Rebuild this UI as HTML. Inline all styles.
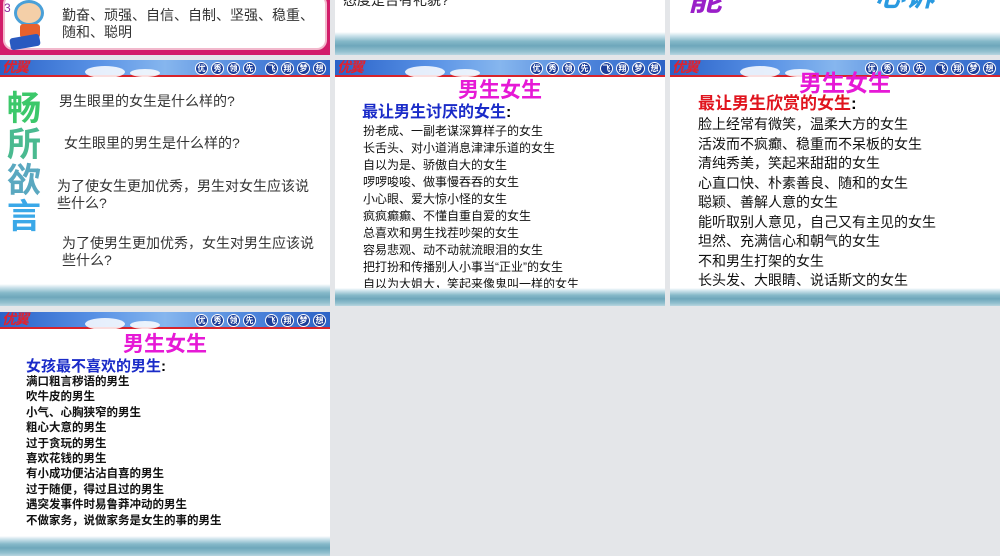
<!DOCTYPE html><html><head><meta charset="utf-8"><style>
*{margin:0;padding:0;box-sizing:border-box}
body{width:1000px;height:556px;background:#e4e6e9;position:relative;overflow:hidden;font-family:"Liberation Sans","Noto Sans CJK SC",sans-serif}
.s{position:absolute;background:#fff;overflow:hidden}
.hd{position:absolute;left:0;top:0;width:100%;height:17px;background:linear-gradient(90deg,#2a62c8,#5a93e6 30%,#86b6ee 50%,#4f86dc 75%,#2d63c6);border-bottom:2px solid #d8232a}
.cl{position:absolute;background:#fff;border-radius:50%;opacity:.85}
.logo{position:absolute;left:2px;top:-1px;color:#e5202a;font-weight:bold;font-style:italic;font-size:14px;letter-spacing:-1px;line-height:17px}
.bd{position:absolute;right:4px;top:2px;display:flex;gap:3px}
.bd span{width:13px;height:13px;border-radius:50%;background:#1d3f9a;border:1px solid #fff;color:#fff;font-size:8px;line-height:11px;text-align:center;font-weight:bold}
.bd span.g{margin-left:6px}
.oc{position:absolute;left:0;width:100%;background:linear-gradient(180deg,#fff 0%,#cfe4ec 15%,#86b9c9 40%,#6ea7bb 60%,#93c0cf 85%,#b8d6e0 100%)}
.t{position:absolute;white-space:nowrap;line-height:1}
.ttl{position:absolute;color:#e619d6;font-weight:bold;font-size:21px;text-align:center;width:100%;line-height:1}
</style></head><body>

<div class="s" style="left:0;top:0;width:330px;height:55px;background:#d21d6a">
 <div style="position:absolute;left:3px;top:-6px;width:324px;height:56px;background:#fff;border-radius:10px;border:2px solid #f2b8cc"></div>
 <div class="t" style="left:4px;top:2px;color:#8c2c9c;font-size:12px">3</div>
 <div style="position:absolute;left:14px;top:0px;width:30px;height:26px;border-radius:50%;background:#f4cfa8;border:3px solid #4aa0d8"></div>
 <div style="position:absolute;left:20px;top:24px;width:20px;height:14px;background:#e8612c;border-radius:3px"></div>
 <div style="position:absolute;left:10px;top:36px;width:30px;height:12px;background:#2a5ac0;border-radius:3px;transform:rotate(-10deg)"></div>
 <div class="t" style="left:62px;top:7px;font-size:14px;color:#333;line-height:17px">勤奋、顽强、自信、自制、坚强、稳重、<br>随和、聪明</div>
</div>
<div class="s" style="left:335px;top:0;width:330px;height:55px">
 <div class="t" style="left:8px;top:-7px;font-size:14px;color:#222">态度是否有礼貌?</div>
 <div class="oc" style="top:32px;height:23px"></div>
</div>
<div class="s" style="left:670px;top:0;width:330px;height:55px">
 <div class="t" style="left:18px;top:-18px;font-size:34px;font-weight:bold;color:#9a1fc8;font-style:italic">能</div>
 <div class="t" style="left:205px;top:-18px;font-size:30px;font-weight:bold;color:#2a9ae0;font-style:italic">心诉</div>
 <div class="oc" style="top:32px;height:23px"></div>
</div>

<div class="s" style="left:0;top:60px;width:330px;height:246px">
 <div class="hd"><div class="cl" style="left:85px;top:6px;width:40px;height:12px"></div><div class="cl" style="left:130px;top:9px;width:30px;height:8px"></div><span class="logo">优翼</span><div class="bd"><span>优</span><span>秀</span><span>领</span><span>先</span><span class="g">飞</span><span>翔</span><span>梦</span><span>想</span></div></div>
 <div class="t" style="left:7px;top:31px;font-size:34px;line-height:36px;font-weight:bold;color:#3cc86a;white-space:normal;width:44px">畅<br><span style="color:#4aba90">所</span><br><span style="color:#5aa8c0">欲</span><br><span style="color:#3aa8e8">言</span></div>
 <div class="t" style="left:59px;top:34px;font-size:14px;color:#333">男生眼里的女生是什么样的?</div>
 <div class="t" style="left:64px;top:76px;font-size:14px;color:#333">女生眼里的男生是什么样的?</div>
 <div class="t" style="left:57px;top:118px;font-size:14px;color:#333;line-height:17px">为了使女生更加优秀，男生对女生应该说<br>些什么?</div>
 <div class="t" style="left:62px;top:175px;font-size:14px;color:#333;line-height:17px">为了使男生更加优秀，女生对男生应该说<br>些什么?</div>
 <div class="oc" style="top:224px;height:22px"></div>
</div>

<div class="s" style="left:335px;top:60px;width:330px;height:246px">
 <div class="hd"><div class="cl" style="left:70px;top:6px;width:40px;height:12px"></div><div class="cl" style="left:115px;top:9px;width:30px;height:8px"></div><span class="logo">优翼</span><div class="bd"><span>优</span><span>秀</span><span>领</span><span>先</span><span class="g">飞</span><span>翔</span><span>梦</span><span>想</span></div></div>
 <div class="ttl" style="top:20px;left:0">男生女生</div>
 <div class="t" style="left:27px;top:45px;font-size:16px;font-weight:bold;color:#1a2bc8">最让男生讨厌的女生<span style="color:#000">:</span></div>
 <div class="t" style="left:28px;top:63px;font-size:12px;line-height:17px;color:#111">扮老成、一副老谋深算样子的女生<br>长舌头、对小道消息津津乐道的女生<br>自以为是、骄傲自大的女生<br>啰啰唆唆、做事慢吞吞的女生<br>小心眼、爱大惊小怪的女生<br>疯疯癫癫、不懂自重自爱的女生<br>总喜欢和男生找茬吵架的女生<br>容易悲观、动不动就流眼泪的女生<br>把打扮和传播别人小事当“正业”的女生<br>自以为大姐大，笑起来像鬼叫一样的女生</div>
 <div class="oc" style="top:228px;height:18px"></div>
</div>

<div class="s" style="left:670px;top:60px;width:330px;height:246px">
 <div class="hd"><div class="cl" style="left:70px;top:6px;width:40px;height:12px"></div><div class="cl" style="left:115px;top:9px;width:30px;height:8px"></div><span class="logo">优翼</span><div class="bd"><span>优</span><span>秀</span><span>领</span><span>先</span><span class="g">飞</span><span>翔</span><span>梦</span><span>想</span></div></div>
 <div class="ttl" style="top:12px;left:10px;font-size:23px">男生女生</div>
 <div class="t" style="left:28px;top:35px;font-size:17px;font-weight:bold;color:#e0141e">最让男生欣赏的女生<span style="color:#000">:</span></div>
 <div class="t" style="left:28px;top:55px;font-size:14px;line-height:19.5px;color:#111">脸上经常有微笑，温柔大方的女生<br>活泼而不疯癫、稳重而不呆板的女生<br>清纯秀美，笑起来甜甜的女生<br>心直口快、朴素善良、随和的女生<br>聪颖、善解人意的女生<br>能听取别人意见，自己又有主见的女生<br>坦然、充满信心和朝气的女生<br>不和男生打架的女生<br>长头发、大眼睛、说话斯文的女生</div>
 <div class="oc" style="top:228px;height:18px"></div>
</div>

<div class="s" style="left:0;top:312px;width:330px;height:244px">
 <div class="hd"><div class="cl" style="left:85px;top:6px;width:40px;height:12px"></div><div class="cl" style="left:130px;top:9px;width:30px;height:8px"></div><span class="logo">优翼</span><div class="bd"><span>优</span><span>秀</span><span>领</span><span>先</span><span class="g">飞</span><span>翔</span><span>梦</span><span>想</span></div></div>
 <div class="ttl" style="top:22px;left:0">男生女生</div>
 <div class="t" style="left:26px;top:47px;font-size:15px;font-weight:bold;color:#1a2bc8">女孩最不喜欢的男生<span style="color:#000">:</span></div>
 <div class="t" style="left:26px;top:63px;font-size:11.5px;line-height:15.4px;font-weight:bold;color:#111">满口粗言秽语的男生<br>吹牛皮的男生<br>小气、心胸狭窄的男生<br>粗心大意的男生<br>过于贪玩的男生<br>喜欢花钱的男生<br>有小成功便沾沾自喜的男生<br>过于随便，得过且过的男生<br>遇突发事件时易鲁莽冲动的男生<br>不做家务，说做家务是女生的事的男生</div>
 <div class="oc" style="top:224px;height:20px"></div>
</div>
</body></html>
